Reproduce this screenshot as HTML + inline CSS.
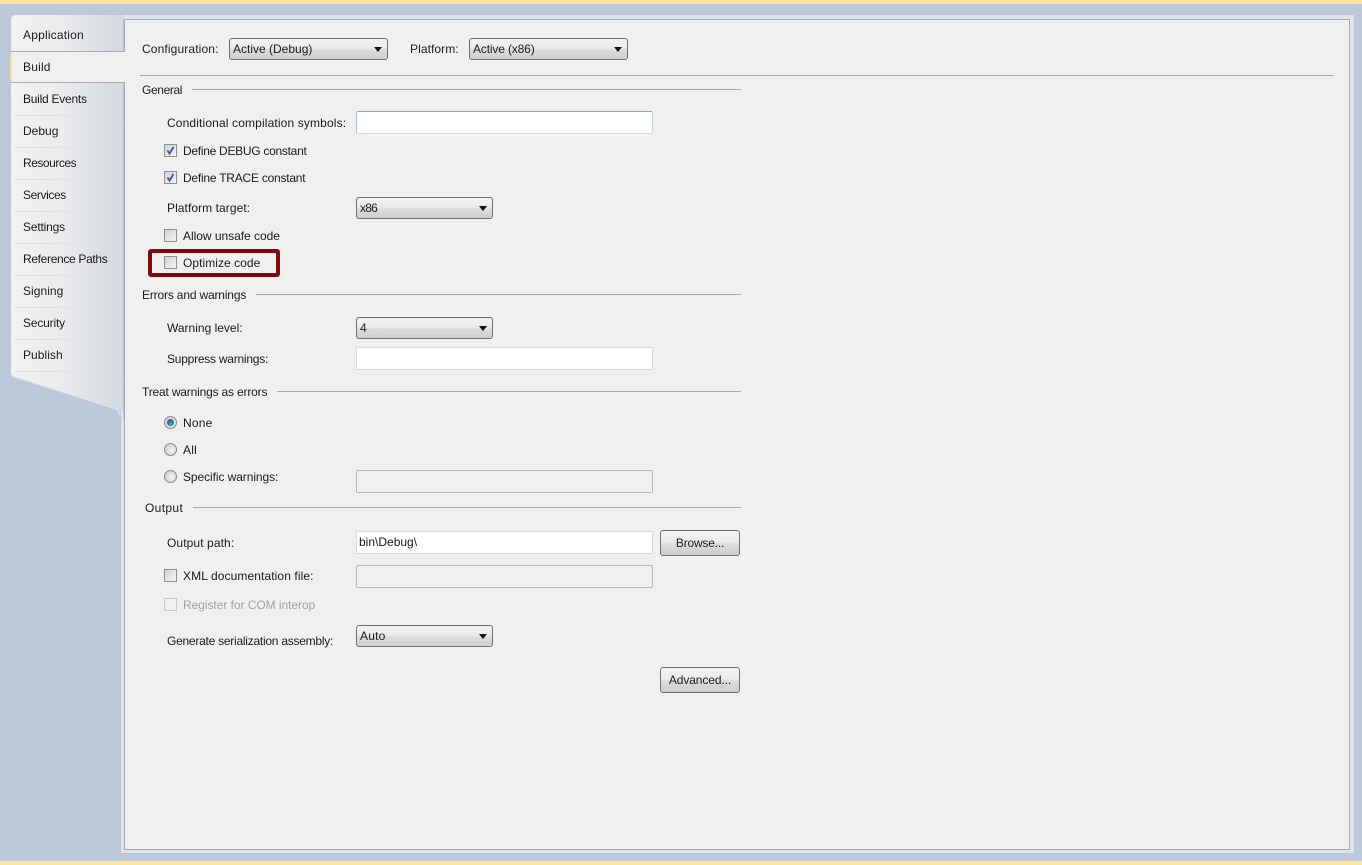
<!DOCTYPE html>
<html><head><meta charset="utf-8"><style>
html,body{margin:0;padding:0;width:1362px;height:865px;overflow:hidden;background:#bcc7d9}
body{position:relative;font-family:"Liberation Sans",sans-serif;font-size:12px;color:#1a1a1a}
.a,.t,.cb,.rb,.sel,.inp,.btn,.hr,.sep{position:absolute;box-sizing:border-box}
.t{white-space:nowrap;line-height:16px;height:16px}
.hr{height:1px;background:#a9a9a9}
.sel{height:22px;border:1px solid #707070;border-radius:3px;background:linear-gradient(#f2f2f2 0,#ebebeb 45%,#dcdcdc 55%,#d0d0d0 100%);line-height:21px;padding-left:3px;white-space:nowrap}
.sel:after{content:"";position:absolute;right:5px;top:8px;width:0;height:0;border-left:4px solid transparent;border-right:4px solid transparent;border-top:5px solid #111}
.inp{height:23px;border:1px solid #d8dbde;border-radius:2px;background:#fff;line-height:21px;padding-left:2px}
.inp.d{background:#f0f0f0;border-color:#b8b8b8}
.btn{height:26px;width:80px;border:1px solid #707070;border-radius:3px;background:linear-gradient(#f3f3f3 0,#ececec 45%,#dcdcdc 55%,#cdcdcd 100%);text-align:center;line-height:25px}
.cb{width:13px;height:13px;border:1px solid #8e8f8f;background:linear-gradient(135deg,#cfd1d3,#f6f6f6)}
.cb.d{border-color:#c8c8c8;background:#f0f0f0}
.cb svg{position:absolute;left:0;top:0}
.rb{width:13px;height:13px;border-radius:50%;border:1px solid #8a8a8a;background:radial-gradient(circle at 60% 60%,#f4f4f4,#c4c4c4)}
.rb.on:after{content:"";position:absolute;left:2px;top:2px;width:7px;height:7px;border-radius:50%;background:radial-gradient(circle at 55% 65%,#3fa4d6,#0b4572)}
.sep{left:15px;width:80px;height:1px;background:linear-gradient(90deg,#dcdee1,#e2e3e6 70%,rgba(226,227,230,0))}
</style></head><body>
<div class="a" style="left:0;top:0;width:1362px;height:4px;background:#ffe49c"></div>
<div class="a" style="left:0;top:861px;width:1362px;height:4px;background:#ffe49c"></div>

<!-- outer panel -->
<div class="a" style="left:120px;top:14px;width:1235px;height:840px;background:#dfe3ea;border:1px solid #b9c3d4"></div>
<div class="a" style="left:124px;top:19px;width:1226px;height:831px;background:#f0f0f0;border:1px solid #a5a8b8"></div>

<!-- tab strip -->
<svg class="a" style="left:0;top:0" width="126" height="420">
<defs><linearGradient id="g" x1="0" x2="1" y1="0" y2="0"><stop offset="0" stop-color="#f2f2f2"/><stop offset=".45" stop-color="#ebecee"/><stop offset="1" stop-color="#d3d7de"/></linearGradient></defs>
<path d="M11 20 Q11 15 16 15 L124 15 L124 412 L118 410 L13 377 Q11 376 11 372 Z" fill="url(#g)"/>
<path d="M124 19 L124 420" stroke="#a5a8b8" fill="none"/>
<path d="M12 376 L113 408 Q120 410 120 416" stroke="#dfe3ea" fill="none"/>
</svg>
<div class="a" style="left:11px;top:51px;width:114px;height:1px;background:#a9abb0"></div>
<div class="a" style="left:10px;top:52px;width:115px;height:30px;background:#f0f0f0;border-left:2px solid #fbdf9e;border-radius:3px 0 0 3px"></div>
<div class="a" style="left:11px;top:82px;width:114px;height:1px;background:#a9abb0"></div>
<div class="sep" style="top:115px"></div><div class="sep" style="top:147px"></div><div class="sep" style="top:179px"></div><div class="sep" style="top:211px"></div><div class="sep" style="top:243px"></div><div class="sep" style="top:275px"></div><div class="sep" style="top:307px"></div><div class="sep" style="top:339px"></div><div class="sep" style="top:371px"></div>

<div class="t" style="left:23px;top:27px;letter-spacing:.2px">Application</div>
<div class="t" style="left:23px;top:59px;letter-spacing:.2px">Build</div>
<div class="t" style="left:23px;top:91px;letter-spacing:-.25px">Build Events</div>
<div class="t" style="left:23px;top:123px;letter-spacing:0">Debug</div>
<div class="t" style="left:23px;top:155px;letter-spacing:-.47px">Resources</div>
<div class="t" style="left:23px;top:187px;letter-spacing:-.4px">Services</div>
<div class="t" style="left:23px;top:219px;letter-spacing:-.17px">Settings</div>
<div class="t" style="left:23px;top:251px;letter-spacing:-.33px">Reference Paths</div>
<div class="t" style="left:23px;top:283px;letter-spacing:.05px">Signing</div>
<div class="t" style="left:23px;top:315px;letter-spacing:-.17px">Security</div>
<div class="t" style="left:23px;top:347px;letter-spacing:.05px">Publish</div>

<!-- top row -->
<div class="t" style="left:142px;top:41px;letter-spacing:.13px">Configuration:</div>
<div class="sel" style="left:229px;top:38px;width:159px;letter-spacing:0">Active (Debug)</div>
<div class="t" style="left:410px;top:41px;letter-spacing:.08px">Platform:</div>
<div class="sel" style="left:469px;top:38px;width:159px;letter-spacing:-.15px">Active (x86)</div>
<div class="hr" style="left:140px;top:75px;width:1194px"></div>

<!-- General -->
<div class="t" style="left:142px;top:82px;letter-spacing:-.37px">General</div>
<div class="hr" style="left:192px;top:89px;width:549px"></div>
<div class="t" style="left:167px;top:115px;letter-spacing:.14px">Conditional compilation symbols:</div>
<div class="inp" style="left:356px;top:111px;width:297px;border-color:#7fa6c4 #c8d6e0 #d4dde4 #b0c4d4"></div>
<div class="cb" style="left:164px;top:144px"><svg width="11" height="11"><path d="M2.5 5.5 L4.5 8.5 L8.5 2" stroke="#4a5a9e" stroke-width="2" fill="none"/></svg></div>
<div class="t" style="left:183px;top:143px;letter-spacing:-.28px">Define DEBUG constant</div>
<div class="cb" style="left:164px;top:171px"><svg width="11" height="11"><path d="M2.5 5.5 L4.5 8.5 L8.5 2" stroke="#4a5a9e" stroke-width="2" fill="none"/></svg></div>
<div class="t" style="left:183px;top:170px;letter-spacing:-.23px">Define TRACE constant</div>
<div class="t" style="left:167px;top:200px;letter-spacing:.07px">Platform target:</div>
<div class="sel" style="left:356px;top:197px;width:137px;letter-spacing:-.8px">x86</div>
<div class="cb" style="left:164px;top:229px"></div>
<div class="t" style="left:183px;top:228px;letter-spacing:-.03px">Allow unsafe code</div>
<div class="a" style="left:148px;top:249px;width:132px;height:28px;border:4px solid #7f0a0f;border-radius:3px"></div>
<div class="cb" style="left:164px;top:256px"></div>
<div class="t" style="left:183px;top:255px;letter-spacing:.05px">Optimize code</div>

<!-- Errors -->
<div class="t" style="left:142px;top:287px;letter-spacing:-.17px">Errors and warnings</div>
<div class="hr" style="left:256px;top:294px;width:485px"></div>
<div class="t" style="left:167px;top:320px;letter-spacing:0">Warning level:</div>
<div class="sel" style="left:356px;top:317px;width:137px">4</div>
<div class="t" style="left:167px;top:351px;letter-spacing:-.24px">Suppress warnings:</div>
<div class="inp" style="left:356px;top:347px;width:297px"></div>

<!-- Treat -->
<div class="t" style="left:142px;top:384px;letter-spacing:-.18px">Treat warnings as errors</div>
<div class="hr" style="left:277px;top:391px;width:464px"></div>
<div class="rb on" style="left:164px;top:416px"></div>
<div class="t" style="left:183px;top:415px;letter-spacing:.2px">None</div>
<div class="rb" style="left:164px;top:443px"></div>
<div class="t" style="left:183px;top:442px;letter-spacing:.2px">All</div>
<div class="rb" style="left:164px;top:470px"></div>
<div class="t" style="left:183px;top:469px;letter-spacing:-.08px">Specific warnings:</div>
<div class="inp d" style="left:356px;top:470px;width:297px"></div>

<!-- Output -->
<div class="t" style="left:145px;top:500px;letter-spacing:.35px">Output</div>
<div class="hr" style="left:193px;top:507px;width:548px"></div>
<div class="t" style="left:167px;top:535px;letter-spacing:.1px">Output path:</div>
<div class="inp" style="left:356px;top:531px;width:297px;letter-spacing:0">bin\Debug\</div>
<div class="btn" style="left:660px;top:530px;letter-spacing:-.2px">Browse...</div>
<div class="cb" style="left:164px;top:569px"></div>
<div class="t" style="left:183px;top:568px;letter-spacing:.1px">XML documentation file:</div>
<div class="inp d" style="left:356px;top:565px;width:297px"></div>
<div class="cb d" style="left:164px;top:598px"></div>
<div class="t" style="left:183px;top:597px;color:#a0a0a0;letter-spacing:-.05px">Register for COM interop</div>
<div class="t" style="left:167px;top:633px;letter-spacing:-.25px">Generate serialization assembly:</div>
<div class="sel" style="left:356px;top:625px;width:137px;letter-spacing:.2px">Auto</div>
<div class="btn" style="left:660px;top:667px;letter-spacing:-.1px">Advanced...</div>
</body></html>
